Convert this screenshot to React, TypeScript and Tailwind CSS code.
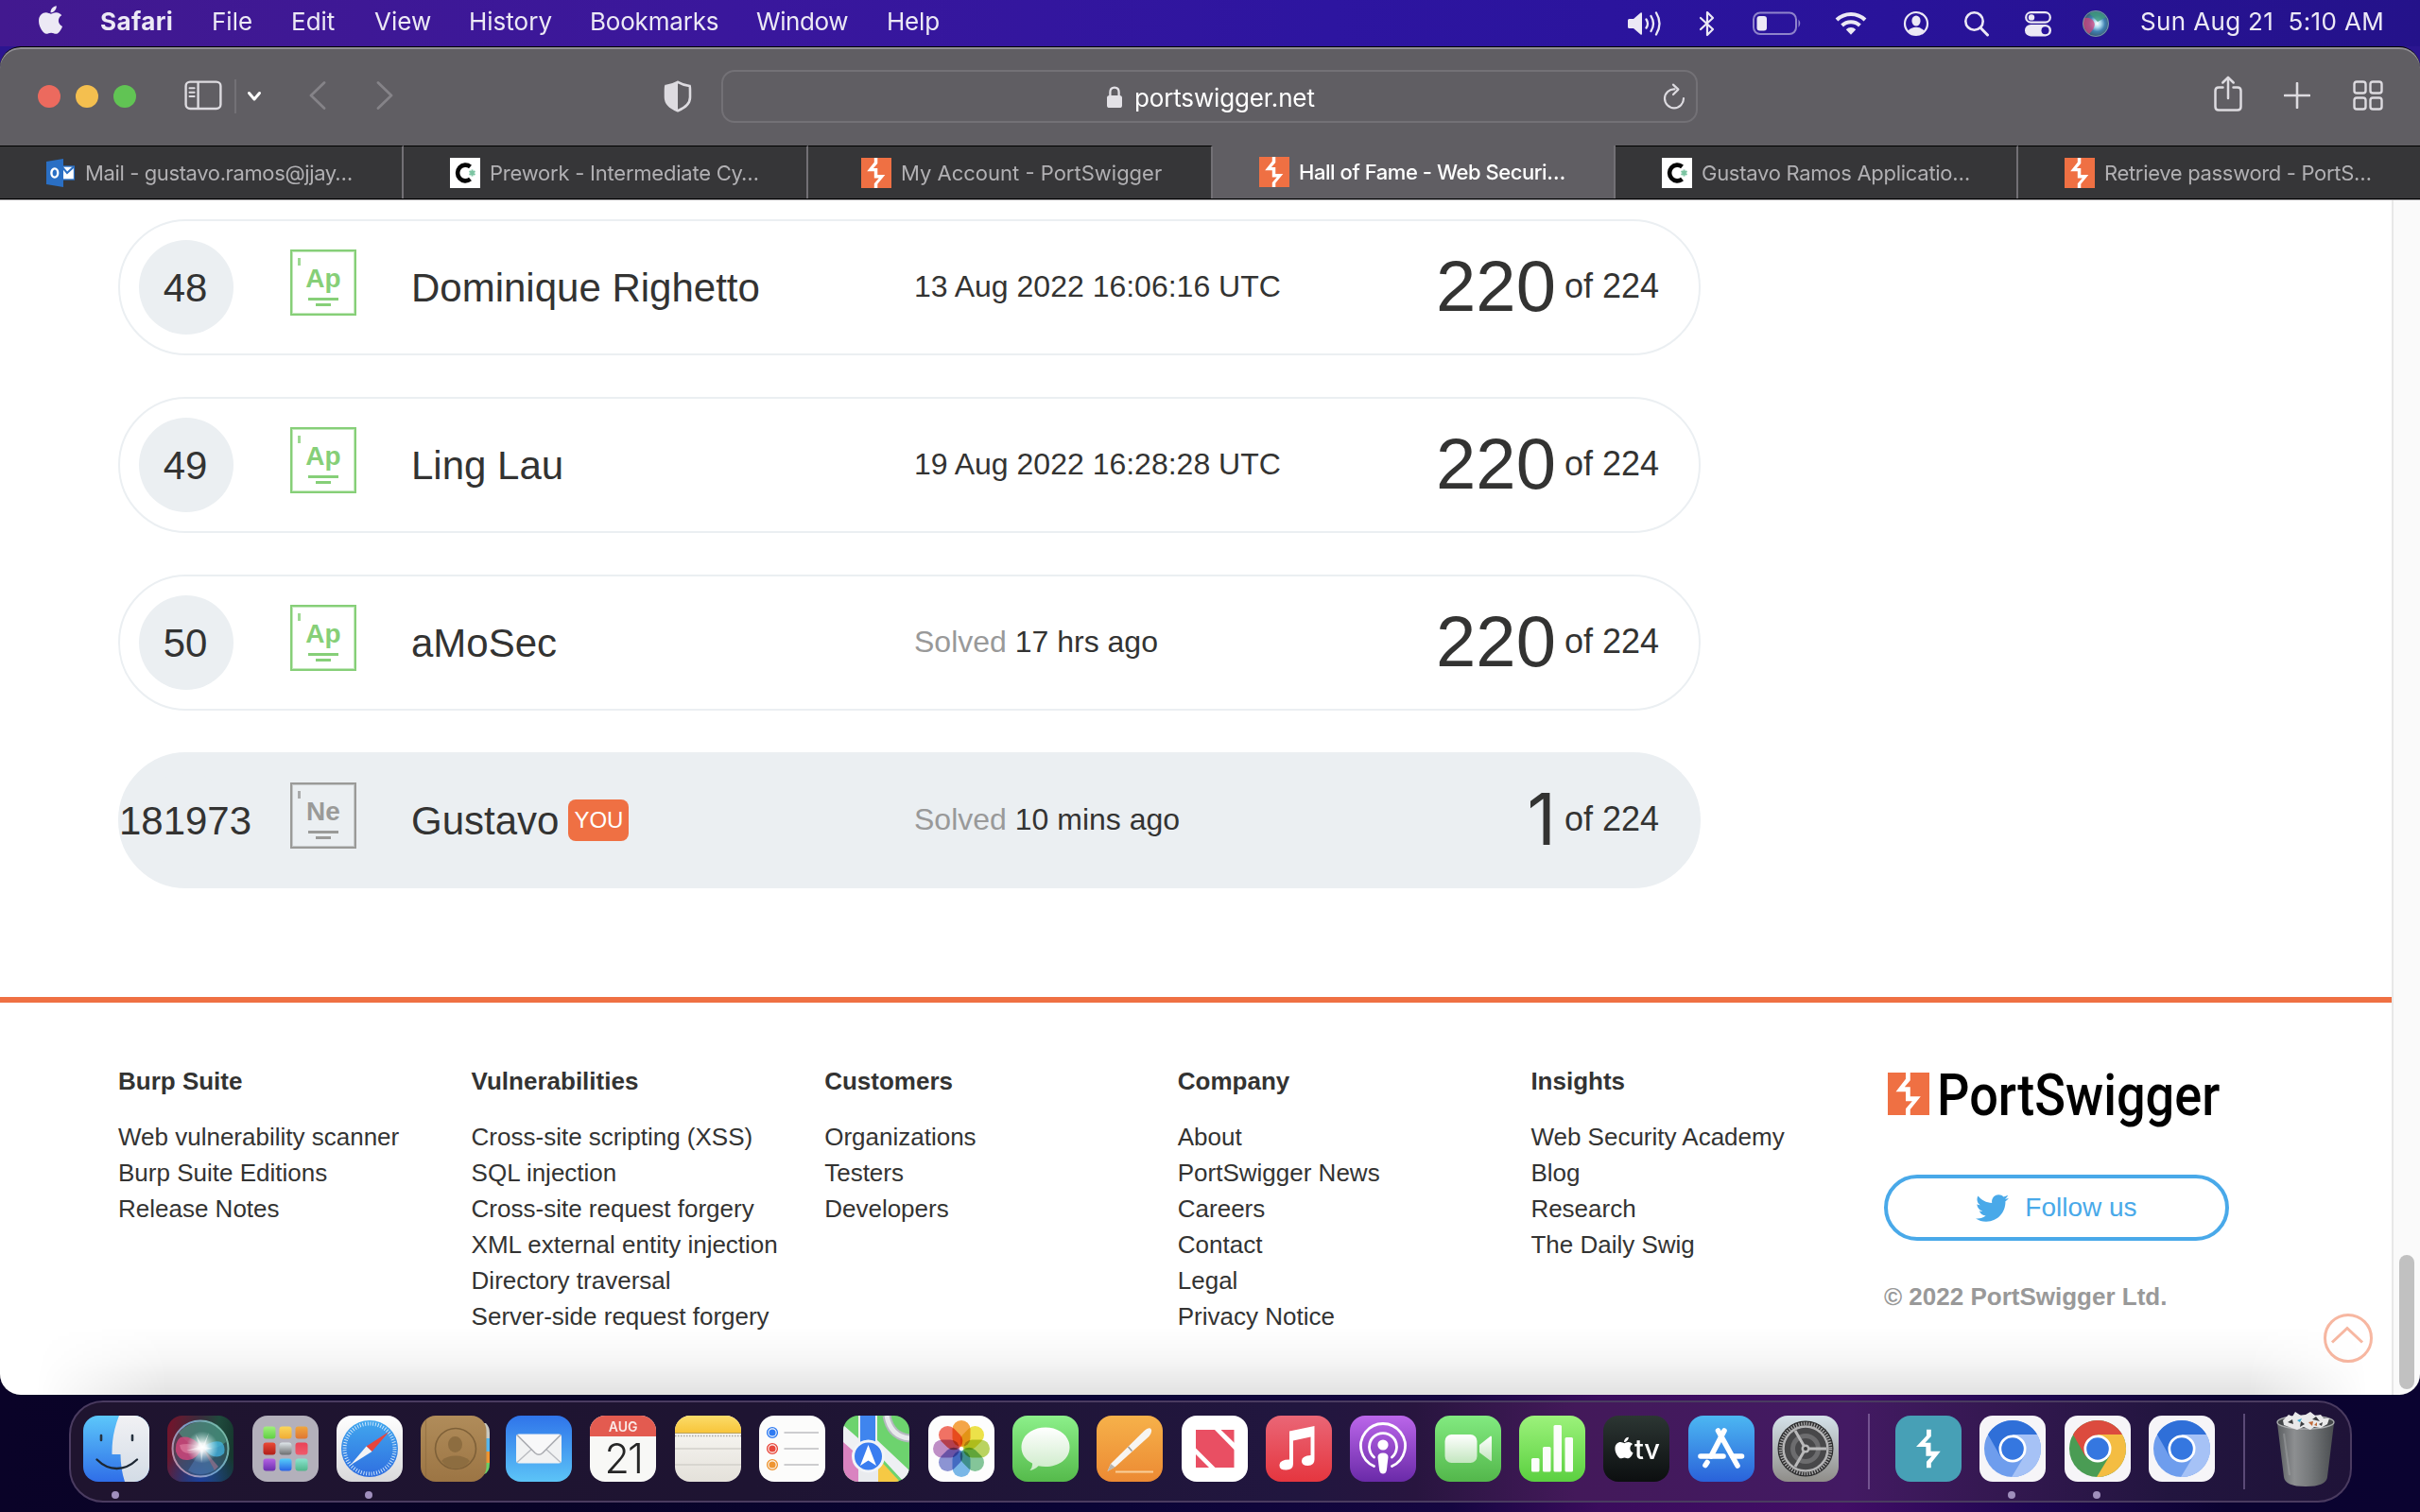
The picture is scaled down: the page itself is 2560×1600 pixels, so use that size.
import React from "react";
import { FaApple, FaTwitter } from "react-icons/fa";

/* ---------- shared marks ---------- */

function PortSwiggerMark({ className }: { className: string }) {
  return (
    <svg viewBox="0 0 45 45" preserveAspectRatio="none" className={`shrink-0 ${className}`}>
      <rect width="45" height="45" fill="#ef7043" />
      <path
        d="M19.4 0H24.3V8.3L18.2 15.3H24.3V25.2H35.6L24.3 39V45H19.4V38.3L26.4 30.2H19.4V20.2H8.7L19.4 6.7Z"
        fill="#fff"
      />
    </svg>
  );
}

function CodeIcon() {
  return (
    <svg viewBox="0 0 32 32" className="size-8 shrink-0">
      <rect width="32" height="32" fill="#fff" />
      <path d="M21.5 9.5A8.2 8.4 0 1 0 21.5 22.5" fill="none" stroke="#050505" strokeWidth="4.6" />
      <path d="M23.5 12.5V19.5M20.5 14.2L26.5 17.8M26.5 14.2L20.5 17.8" stroke="#7cc4a2" strokeWidth="2" />
    </svg>
  );
}

function OutlookIcon() {
  return (
    <svg viewBox="0 0 30 30" className="size-[30px] shrink-0">
      <rect x="14" y="8" width="15.5" height="14" fill="#fff" stroke="#2a6fc4" strokeWidth="1.4" />
      <path d="M17 9L22 15L29 8.5" fill="none" stroke="#2a6fc4" strokeWidth="2" />
      <path d="M0 3L18 0V30L0 27Z" fill="#2a6fc4" />
      <ellipse cx="8.8" cy="15" rx="3.4" ry="4.6" fill="none" stroke="#fff" strokeWidth="2.4" />
    </svg>
  );
}

/* ---------- menu bar ---------- */

const menus = [
  { label: "File", cls: "w-[84px]" },
  { label: "Edit", cls: "w-[88px]" },
  { label: "View", cls: "w-[100px]" },
  { label: "History", cls: "w-[128px]" },
  { label: "Bookmarks", cls: "w-[176px] tracking-[-0.2px]" },
  { label: "Window", cls: "w-[138px] tracking-[-0.4px]" },
  { label: "Help", cls: "w-[60px] tracking-[-0.2px]" },
];

function MenuBar() {
  return (
    <header className="flex h-[49px] shrink-0 items-start bg-[linear-gradient(90deg,#42198f_0%,#3a179c_30%,#2d15a0_55%,#29139a_78%,#24128a_100%)] pl-[39px] font-['Inter'] text-[26px] leading-[45px] text-[#ece9f5]">
      <FaApple className="mt-[4px] h-[34px] w-[29px]" />
      <div className="ml-[38px] flex whitespace-nowrap">
        <span className="w-[118px] font-bold tracking-[0.4px]">Safari</span>
        {menus.map((m) => (
          <span key={m.label} className={m.cls}>
            {m.label}
          </span>
        ))}
      </div>
      <div className="ml-auto flex h-[49px] items-center pr-[36px]">
        <svg width="38" height="26" viewBox="0 0 38 26" className="mr-[38px]">
          <path d="M1 9.5Q1 8 2.5 8H7L14.5 1.5Q16 .5 16 2.5V23.5Q16 25.5 14.5 24.5L7 18H2.5Q1 18 1 16.5Z" fill="#ece9f5" />
          <path d="M20.5 8.5Q23.5 13 20.5 17.5M25.5 5Q30.5 13 25.5 21M31 1.5Q38 13 31 24.5" fill="none" stroke="#ece9f5" strokeWidth="2.3" strokeLinecap="round" />
        </svg>
        <svg width="18" height="28" viewBox="0 0 18 28" className="mr-[39px]">
          <path d="M2 8L15 20L9 26V2L15 8L2 20" fill="none" stroke="#ece9f5" strokeWidth="2.2" strokeLinejoin="round" strokeLinecap="round" />
        </svg>
        <svg width="52" height="26" viewBox="0 0 52 26" className="mr-[35px]">
          <rect x="1" y="1.5" width="45" height="22.5" rx="7" fill="none" stroke="#8f84cb" strokeWidth="2" />
          <rect x="4.5" y="5" width="10.5" height="15.5" rx="3" fill="#ece9f5" />
          <path d="M48.5 8.5Q52 12.7 48.5 17Z" fill="#8f84cb" />
        </svg>
        <svg width="34" height="26" viewBox="0 0 34 26" className="mr-[38px]">
          <path d="M2 9A21.5 21.5 0 0 1 32 9" fill="none" stroke="#ece9f5" strokeWidth="4" />
          <path d="M7.6 15A13.5 13.5 0 0 1 26.4 15" fill="none" stroke="#ece9f5" strokeWidth="4" />
          <path d="M11.8 19.2A7.5 7.5 0 0 1 22.2 19.2L17 24.8Z" fill="#ece9f5" />
        </svg>
        <svg width="28" height="28" viewBox="0 0 28 28" className="mr-[36px]">
          <circle cx="14" cy="14" r="12" fill="none" stroke="#ece9f5" strokeWidth="2.2" />
          <ellipse cx="14" cy="11" rx="4.6" ry="5.6" fill="#ece9f5" />
          <path d="M5.5 21.5Q9 17.8 14 17.8T22.5 21.5Q19 26 14 26T5.5 21.5Z" fill="#ece9f5" />
        </svg>
        <svg width="28" height="28" viewBox="0 0 28 28" className="mr-[36px]">
          <circle cx="11.5" cy="11.5" r="9.2" fill="none" stroke="#ece9f5" strokeWidth="2.6" />
          <path d="M18.2 18.5L25.5 26" stroke="#ece9f5" strokeWidth="3" strokeLinecap="round" />
        </svg>
        <svg width="30" height="28" viewBox="0 0 30 28" className="mr-[31px]">
          <rect x="2.2" y="2.2" width="25.6" height="10.4" rx="5.2" fill="none" stroke="#ece9f5" strokeWidth="2.2" />
          <circle cx="8" cy="7.4" r="3.2" fill="#ece9f5" />
          <rect x="1" y="15" width="28" height="12.4" rx="6.2" fill="#ece9f5" />
          <circle cx="22.5" cy="21.2" r="4" fill="#29139a" />
        </svg>
        <svg width="30" height="30" viewBox="0 0 30 30" className="mr-[32px]">
          <defs>
            <radialGradient id="siriMini" cx="0.55" cy="0.5">
              <stop offset="0" stopColor="#fff" />
              <stop offset="0.3" stopColor="#a8d8ee" />
              <stop offset="0.6" stopColor="#3f7fb0" />
              <stop offset="1" stopColor="#3a5a72" />
            </radialGradient>
          </defs>
          <circle cx="15" cy="15" r="14" fill="url(#siriMini)" />
          <path d="M3 9A14 14 0 0 0 8 26Q16 18 13 13T3 9Z" fill="#d0427c" opacity=".75" />
          <path d="M8 4Q18 -1 26 8L17 13Z" fill="#3f9a7a" opacity=".8" />
          <circle cx="15" cy="15" r="13.5" fill="none" stroke="#9fb6c6" strokeWidth="1" opacity=".6" />
        </svg>
        <span className="-mt-[4px] w-[260px] whitespace-pre tracking-[0.35px]">Sun Aug 21  5:10 AM</span>
      </div>
    </header>
  );
}

/* ---------- browser chrome ---------- */

function Toolbar() {
  return (
    <div className="mb-[1px] flex h-[102px] items-center px-[40px]">
      <div className="flex gap-4">
        <span className="size-6 rounded-full bg-[#ec6a5e]" />
        <span className="size-6 rounded-full bg-[#f4bf4f]" />
        <span className="size-6 rounded-full bg-[#61c454]" />
      </div>
      <svg width="40" height="32" viewBox="0 0 40 32" className="-mt-[2px] ml-[51px]" fill="none" stroke="#dddbe0" strokeWidth="2.4">
        <rect x="1.6" y="1.6" width="36.8" height="28.4" rx="4.5" />
        <path d="M14.6 2V30" />
        <path d="M5.5 8.3H10.6M5.5 12.7H10.6M5.5 17.1H10.6" strokeWidth="2" strokeLinecap="round" />
      </svg>
      <span className="ml-[13px] h-9 w-[2px] bg-[#737176]" />
      <svg width="16" height="12" viewBox="0 0 16 12" className="-mt-[1px] ml-[11px]">
        <path d="M2.5 2.5L8 9L13.5 2.5" fill="none" stroke="#fff" strokeWidth="3" strokeLinecap="round" strokeLinejoin="round" />
      </svg>
      <svg width="18" height="30" viewBox="0 0 18 30" className="-mt-[2px] ml-[50px]">
        <path d="M16 1.5L2 15L16 28.5" fill="none" stroke="#858388" strokeWidth="2.8" strokeLinecap="round" strokeLinejoin="round" />
      </svg>
      <svg width="18" height="30" viewBox="0 0 18 30" className="-mt-[2px] ml-[53px]">
        <path d="M2 1.5L16 15L2 28.5" fill="none" stroke="#858388" strokeWidth="2.8" strokeLinecap="round" strokeLinejoin="round" />
      </svg>
      <svg width="30" height="34" viewBox="0 0 30 34" className="-mt-[1px] ml-[286px]">
        <path d="M15 1.8Q21 5.2 27.6 6Q28 7 28 12V18Q28 27 15 32.2Q2 27 2 18V12Q2 7 2.4 6Q9 5.2 15 1.8Z" fill="none" stroke="#dddbe0" strokeWidth="2.6" />
        <path d="M15 1.8V32.2Q2 27 2 18V6Q9 5.2 15 1.8Z" fill="#dddbe0" />
      </svg>
      <div className="ml-[31px] flex h-14 w-[1033px] items-center rounded-[14px] border-2 border-[#737176]">
        <svg width="18" height="24" viewBox="0 0 18 24" className="ml-[405px] mt-[2px]">
          <rect x="1" y="10" width="16" height="13" rx="2.6" fill="#e3e1e6" />
          <path d="M4.4 11V6.5Q4.4 1.6 9 1.6T13.6 6.5V11" fill="none" stroke="#e3e1e6" strokeWidth="2.3" />
        </svg>
        <span className="ml-[12px] mt-[3px] w-[200px] whitespace-nowrap font-['Inter'] text-[26px] leading-none tracking-[-0.15px] text-white">portswigger.net</span>
        <svg width="24" height="28" viewBox="0 0 24 28" className="ml-auto mr-[11px]" fill="none" stroke="#dddbe0" strokeWidth="2.2" strokeLinecap="round" strokeLinejoin="round">
          <path d="M12.5 6.3A10 10 0 1 0 22 16" />
          <path d="M11 1.6L16.4 6.6L11 12" />
        </svg>
      </div>
      <div className="-mt-[2px] ml-auto flex items-center">
        <svg width="30" height="38" viewBox="0 0 30 38" className="-mt-[4px]" fill="none" stroke="#dddbe0" strokeWidth="2.5" strokeLinecap="round" strokeLinejoin="round">
          <path d="M9.5 12.5H5Q1.5 12.5 1.5 16V33Q1.5 36.5 5 36.5H25Q28.5 36.5 28.5 33V16Q28.5 12.5 25 12.5H20.5" />
          <path d="M15 24V2M9.3 7.5L15 1.8L20.7 7.5" />
        </svg>
        <svg width="28" height="28" viewBox="0 0 28 28" className="ml-[44px]">
          <path d="M14 1V27M1 14H27" stroke="#dddbe0" strokeWidth="2.6" strokeLinecap="round" />
        </svg>
        <svg width="32" height="32" viewBox="0 0 32 32" className="ml-[45px] -mr-[1px]" fill="none" stroke="#dddbe0" strokeWidth="2.4">
          <rect x="1.5" y="1.5" width="12" height="12" rx="2.6" />
          <rect x="18.5" y="1.5" width="12" height="12" rx="2.6" />
          <rect x="1.5" y="18.5" width="12" height="12" rx="2.6" />
          <rect x="18.5" y="18.5" width="12" height="12" rx="2.6" />
        </svg>
      </div>
    </div>
  );
}

const tabs = [
  { icon: "outlook", text: "Mail - gustavo.ramos@jjay…", box: "w-[427px] pl-[49px] gap-[11px] tracking-[-0.38px]" },
  { icon: "code", text: "Prework - Intermediate Cy…", box: "w-[428px] pl-[49px] gap-[10px] tracking-[-0.23px]" },
  { icon: "ps", text: "My Account - PortSwigger", box: "w-[428px] pl-[56px] gap-[10px]" },
  { icon: "ps", text: "Hall of Fame - Web Securi…", box: "w-[426px] pl-[49px] gap-[10px] tracking-[-0.45px]", active: true },
  { icon: "code", text: "Gustavo Ramos Applicatio…", box: "w-[426px] pl-[49px] gap-[10px] tracking-[-0.28px]" },
  { icon: "ps", text: "Retrieve password - PortS…", box: "w-[425px] pl-[49px] gap-[10px] tracking-[-0.33px]" },
];

function TabIcon({ kind }: { kind: string }) {
  if (kind === "outlook") return <OutlookIcon />;
  if (kind === "code") return <CodeIcon />;
  return <PortSwiggerMark className="size-8" />;
}

function TabBar() {
  return (
    <nav className="flex h-[57px] border-b border-black font-['Inter'] text-[22px] leading-none">
      {tabs.map((t) => (
        <div
          key={t.text}
          className={
            t.active
              ? `flex items-center whitespace-nowrap border-r-2 border-[#727075] font-medium text-white ${t.box}`
              : `flex items-center whitespace-nowrap border-r-2 border-r-[#727075] border-t border-t-black bg-[#363638] text-[#b1b0b3] last:border-r-0 ${t.box}`
          }
        >
          <TabIcon kind={t.icon} />
          <span>{t.text}</span>
        </div>
      ))}
    </nav>
  );
}

/* ---------- page ---------- */

const rows = [
  { rank: "48", level: "Ap", name: "Dominique Righetto", date: "13 Aug 2022 16:06:16 UTC", score: "220" },
  { rank: "49", level: "Ap", name: "Ling Lau", date: "19 Aug 2022 16:28:28 UTC", score: "220" },
  { rank: "50", level: "Ap", name: "aMoSec", solved: "17 hrs ago", score: "220" },
  { rank: "181973", level: "Ne", name: "Gustavo", solved: "10 mins ago", score: "1", you: true },
];

function LevelBadge({ level, muted }: { level: string; muted?: boolean }) {
  return (
    <div
      className={`relative ml-[60px] flex size-[70px] shrink-0 -translate-y-[5px] flex-col items-center border-2 ${
        muted
          ? "border-[#9a9a98] text-[#9a9a98] shadow-[inset_0_0_0_1px_#c6c9ca]"
          : "border-[#86cf78] text-[#86cf78] shadow-[inset_0_0_0_1px_#c4e8bd]"
      }`}
    >
      <span className="absolute left-[6px] top-[7px] h-2 w-[3px] bg-current opacity-80" />
      <span className="mt-[14px] text-[28px] font-bold leading-[30px]">{level}</span>
      <span className="mt-[5px] h-[3px] w-8 bg-current" />
      <span className="mt-[3px] h-[3px] w-4 bg-current" />
    </div>
  );
}

function Row({ row }: { row: (typeof rows)[number] }) {
  return (
    <li
      className={`flex h-36 items-center whitespace-nowrap rounded-full border-2 border-[#ebeff2] pl-5 pr-[42px] ${
        row.you ? "bg-[#ebeff2]" : ""
      }`}
    >
      <div className="flex size-[100px] shrink-0 items-center justify-center rounded-full bg-[#ebeff2] pr-[2px] text-[42px]">
        {row.rank}
      </div>
      <LevelBadge level={row.level} muted={row.you} />
      <div className="ml-[58px] flex w-[532px] items-center text-[42px]">
        {row.name}
        {row.you && (
          <span className="ml-[10px] flex h-11 w-16 items-center justify-center rounded-lg bg-[#ef7043] text-2xl text-white">
            YOU
          </span>
        )}
      </div>
      <div className="-mt-[2px] text-[32px]">
        {row.solved ? (
          <>
            <span className="text-[#999]">Solved</span> {row.solved}
          </>
        ) : (
          row.date
        )}
      </div>
      <div className="-mt-[3px] ml-auto flex items-center gap-[9px]">
        <span className={row.you ? "font-['Inter'] text-[75px] leading-none" : "text-[76px] leading-none"}>{row.score}</span>
        <span className="text-[36px]">of 224</span>
      </div>
    </li>
  );
}

const columns = [
  { title: "Burp Suite", links: ["Web vulnerability scanner", "Burp Suite Editions", "Release Notes"] },
  {
    title: "Vulnerabilities",
    links: [
      "Cross-site scripting (XSS)",
      "SQL injection",
      "Cross-site request forgery",
      "XML external entity injection",
      "Directory traversal",
      "Server-side request forgery",
    ],
  },
  { title: "Customers", links: ["Organizations", "Testers", "Developers"] },
  { title: "Company", links: ["About", "PortSwigger News", "Careers", "Contact", "Legal", "Privacy Notice"] },
  { title: "Insights", links: ["Web Security Academy", "Blog", "Research", "The Daily Swig"] },
];

function Footer() {
  return (
    <footer className="mt-[115px] flex border-t-[6px] border-[#ef7043] pl-[125px] pt-16 text-[26px] leading-[38px]">
      {columns.map((c) => (
        <div key={c.title} className="w-[373.6px] whitespace-nowrap">
          <h3 className="mb-[21px] font-bold">{c.title}</h3>
          <ul>
            {c.links.map((l) => (
              <li key={l}>{l}</li>
            ))}
          </ul>
        </div>
      ))}
      <div className="flex w-[365px] flex-col whitespace-nowrap pt-[10px]">
        <div className="ml-1 flex h-[45px] items-center">
          <PortSwiggerMark className="h-[45px] w-[44px]" />
          <span className="ml-[8px] mt-[1px] origin-left scale-x-[0.872] font-['Roboto'] text-[62px] font-medium leading-[45px] text-black">
            PortSwigger
          </span>
        </div>
        <div className="mt-[63px] flex h-[70px] items-center justify-center rounded-full border-4 border-[#49a9e9] text-[28px] text-[#49a9e9]">
          <FaTwitter className="mr-[17px] size-[35px]" />
          Follow us
        </div>
        <p className="mt-[40px] font-bold text-[#999]">© 2022 PortSwigger Ltd.</p>
      </div>
    </footer>
  );
}

function Page() {
  return (
    <div className="relative flex h-[1265px] border-t border-[#a9a8ab] bg-white font-['Liberation_Sans'] text-[#333332]">
      <main className="w-[2530px]">
        <ol className="ml-[125px] mt-5 flex w-[1674px] flex-col gap-11">
          {rows.map((r) => (
            <Row key={r.rank} row={r} />
          ))}
        </ol>
        <Footer />
      </main>
      <div className="relative w-[30px] border-l-2 border-[#e8e8e8] bg-[#fafafa]">
        <div className="absolute left-[6px] top-[1116px] h-[142px] w-4 rounded-full bg-[#c1c1c1]" />
      </div>
      <svg viewBox="0 0 52 52" className="absolute left-[2458px] top-[1178px] size-[52px]" fill="none" stroke="#f7b7a1" strokeWidth="3">
        <circle cx="26" cy="26" r="24.5" />
        <path d="M9 30.5L25 15.5L41 30.5" />
      </svg>
      <div className="absolute bottom-0 left-0 h-[72px] w-[2530px] bg-[linear-gradient(180deg,transparent,rgba(0,0,0,0.03)_45%,rgba(0,0,0,0.115))] [mask-image:linear-gradient(90deg,transparent_1.5%,black_7%,black_94%,transparent_99%)]" />
    </div>
  );
}

/* ---------- dock ---------- */

function Tile({ children, className = "" }: { children: React.ReactNode; className?: string }) {
  return (
    <svg viewBox="0 0 70 70" className={`size-[70px] shrink-0 rounded-2xl ${className}`}>
      {children}
    </svg>
  );
}

function Grad({ id, from, to }: { id: string; from: string; to: string }) {
  return (
    <linearGradient id={id} x1="0" y1="0" x2="0" y2="1">
      <stop offset="0" stopColor={from} />
      <stop offset="1" stopColor={to} />
    </linearGradient>
  );
}

function Finder() {
  return (
    <Tile>
      <Grad id="fin1" from="#5cc7fa" to="#2f6ee8" />
      <Grad id="fin2" from="#f1f1f4" to="#d3dce6" />
      <rect width="70" height="70" fill="url(#fin1)" />
      <path d="M38 0Q30 20 30.5 41H39.5Q39.5 56 44 70H70V0Z" fill="url(#fin2)" />
      <path d="M19 21V26M52 21V26" stroke="#26323f" strokeWidth="2.6" strokeLinecap="round" />
      <path d="M14.5 46.5Q24 56 35.5 56T57 46.5" fill="none" stroke="#1c2733" strokeWidth="2.4" strokeLinecap="round" />
    </Tile>
  );
}

function Siri() {
  return (
    <Tile>
      <linearGradient id="si1" x1="0" y1="0.2" x2="1" y2="0.35">
        <stop offset="0" stopColor="#74142b" />
        <stop offset="0.45" stopColor="#3b2b3c" />
        <stop offset="0.75" stopColor="#1f4a3c" />
        <stop offset="1" stopColor="#17382f" />
      </linearGradient>
      <radialGradient id="si3" cx="0.5" cy="1" r="0.6">
        <stop offset="0" stopColor="#1c3f9c" />
        <stop offset="1" stopColor="#1c3f9c" stopOpacity="0" />
      </radialGradient>
      <radialGradient id="si2">
        <stop offset="0" stopColor="#fff" />
        <stop offset="0.25" stopColor="#fff" stopOpacity=".9" />
        <stop offset="1" stopColor="#c9f4f0" stopOpacity="0" />
      </radialGradient>
      <linearGradient id="si4" x1="0" x2="1" y1="0.8" y2="0.2">
        <stop offset="0" stopColor="#d7a0b6" />
        <stop offset="0.5" stopColor="#7fb2e0" />
        <stop offset="1" stopColor="#86cfb4" />
      </linearGradient>
      <rect width="70" height="70" fill="url(#si1)" />
      <rect width="70" height="70" fill="url(#si3)" />
      <circle cx="35" cy="35" r="29" fill="#4a6a7a" opacity=".45" />
      <path d="M12 18Q28 2 46 8Q60 14 62 28Q50 38 36 34Q22 32 12 18Z" fill="#4fa58a" opacity=".55" />
      <path d="M37 34Q26 20 14 23Q8 27 9 38Q12 48 22 47Q32 46 37 34Z" fill="#e0457f" opacity=".75" />
      <path d="M37 34Q24 28 13 31Q14 40 24 40Q32 39 37 34Z" fill="#f29cb8" opacity=".45" />
      <path d="M37 34Q48 25 57 28Q62 32 60 40Q54 46 46 42Z" fill="#42b4e6" opacity=".75" />
      <path d="M37 34L22 58Q34 66 50 58Z" fill="#5b92d8" opacity=".35" />
      <path d="M37 34L54 54L50 58Z" fill="#e88aa8" opacity=".4" />
      <circle cx="37" cy="33.5" r="17" fill="url(#si2)" />
      <path d="M30 20L37.5 32L44 18L39.500 33L48 35L38 36L36 50L35 36L20 37L34 33Z" fill="#fff" opacity=".5" />
      <circle cx="35" cy="35" r="29.5" fill="none" stroke="url(#si4)" strokeWidth="2" opacity=".85" />
    </Tile>
  );
}

const pads = [
  ["#a0f07c", "#5fd043"],
  ["#fbd65a", "#f0ac35"],
  ["#f0a63e", "#df7633"],
  ["#ea4a36", "#b01f1a"],
  ["#dfe6ea", "#6c6e70"],
  ["#ea4257", "#ef5b6c"],
  ["#b562e4", "#6a2fae"],
  ["#55cffa", "#2a62e4"],
  ["#8be4cf", "#4fb58a"],
];

function Launchpad() {
  return (
    <Tile>
      <rect width="70" height="70" fill="#b3b0bb" />
      {pads.map(([from, to], i) => (
        <g key={from}>
          <Grad id={`pad${i}`} from={from} to={to} />
          <rect x={11.5 + (i % 3) * 17} y={11.5 + Math.floor(i / 3) * 17} width="13" height="13" rx="3" fill={`url(#pad${i})`} />
        </g>
      ))}
    </Tile>
  );
}

function Safari() {
  return (
    <Tile>
      <Grad id="sf1" from="#ffffff" to="#d9d9db" />
      <Grad id="sf2" from="#41a7ee" to="#2f6ee0" />
      <rect width="70" height="70" fill="url(#sf1)" />
      <circle cx="35" cy="35" r="30" fill="url(#sf2)" />
      <circle cx="35" cy="35" r="26.5" fill="none" stroke="#d8ebfb" strokeWidth="4" strokeDasharray="0.9 1.87" />
      <path d="M55.500 17L37.500 38L31.500 32.500Z" fill="#e8453c" />
      <path d="M14.5 52.5L31.5 32.500L37.500 38Z" fill="#f3f3f5" />
    </Tile>
  );
}

function Contacts() {
  return (
    <svg viewBox="0 0 73 70" className="-mr-[3px] h-[70px] w-[73px] shrink-0">
      <Grad id="ct1" from="#b08c5a" to="#9c7544" />
      <path d="M60 8H69Q73 12 73 18V25H60Z" fill="#c9c9c0" />
      <path d="M60 24H73V38H60Z" fill="#55b6ec" />
      <path d="M60 38H73V50H60Z" fill="#ee9430" />
      <path d="M60 50H73Q73 60 67 62H60Z" fill="#6ad066" />
      <rect width="69.5" height="70" rx="16" fill="url(#ct1)" />
      <path d="M5.5 4V66" stroke="#8b6a3e" strokeWidth="1.2" opacity=".6" />
      <circle cx="37" cy="35" r="21.5" fill="none" stroke="#7e6038" strokeWidth="1.6" />
      <ellipse cx="36.5" cy="30.5" rx="7.5" ry="8.5" fill="#8d6d40" />
      <path d="M22 48Q27 42.5 37 42.5T52 48Q46 56 37 56T22 48Z" fill="#8d6d40" />
    </svg>
  );
}

function Mail() {
  return (
    <Tile>
      <Grad id="ml1" from="#2f74ea" to="#5cc4f7" />
      <rect width="70" height="70" fill="url(#ml1)" />
      <rect x="11" y="19.5" width="48" height="31" rx="3" fill="#f1f2f3" />
      <path d="M12 49.5L29 34M58 49.5L41 34" stroke="#b9bbc0" strokeWidth="1.4" />
      <path d="M12 20.5L31 39.5Q35 43 39 39.5L58 20.5" fill="#f8f8f9" stroke="#a9abb0" strokeWidth="1.6" />
    </Tile>
  );
}

function Calendar() {
  return (
    <div className="flex size-[70px] shrink-0 flex-col items-center overflow-hidden rounded-2xl bg-[#f8f8f6] font-['Inter']">
      <div className="flex h-[22px] w-full shrink-0 items-center justify-center bg-[#e35b50] pt-[2px] text-[14px] font-semibold leading-none text-[#fbe9e6]">
        AUG
      </div>
      <span className="mt-[1px] text-[43px] font-light leading-[44px] tracking-[-2px] text-[#262626]">21</span>
    </div>
  );
}

function Notes() {
  return (
    <Tile>
      <Grad id="nt1" from="#fbdc6a" to="#f8c53a" />
      <Grad id="nt2" from="#fbfaf7" to="#e4e1da" />
      <rect width="70" height="70" fill="url(#nt2)" />
      <rect width="70" height="18" fill="url(#nt1)" />
      <path d="M0 18.5H70" stroke="#b9a15c" strokeWidth="1" />
      <path d="M0 21.5H70" stroke="#a8a69f" strokeWidth="1.5" strokeDasharray="1.5 1.5" />
      <path d="M0 35H70M0 52H70" stroke="#d2d0ca" strokeWidth="1.4" />
    </Tile>
  );
}

const reminderDots = ["#2f7bf2", "#e8493d", "#ee9532"];

function Reminders() {
  return (
    <Tile>
      <rect width="70" height="70" fill="#fcfcfb" />
      {reminderDots.map((c, i) => (
        <g key={c} transform={`translate(14 ${18 + i * 17})`}>
          <circle r="5.4" fill="none" stroke={c} strokeWidth="1.4" />
          <circle r="3.6" fill={c} />
          <path d="M12.5 0H49" stroke="#bebec0" strokeWidth="1.6" />
        </g>
      ))}
    </Tile>
  );
}

function Maps() {
  return (
    <Tile>
      <rect width="70" height="70" fill="#6dd36e" />
      <path d="M0 24L0 70H16V40Z" fill="#d983c0" />
      <path d="M36 44L60 70H36Z" fill="#f6c944" />
      <path d="M0 10L0 28L18 44L40 44L64 70H70V58L36 26V0H16V24Z" fill="#eef0f3" />
      <path d="M16 46V70H37V46Z" fill="#e9ebee" />
      <path d="M18 0H34V44H18Z" fill="#3f85ee" />
      <path d="M46 0Q50 22 70 24" fill="none" stroke="#b5b8c0" strokeWidth="9" />
      <path d="M46 0Q50 22 70 24" fill="none" stroke="#e7e9ec" strokeWidth="5" />
      <circle cx="26.5" cy="43" r="16" fill="#3a7df0" stroke="#f2f4f7" strokeWidth="3" />
      <path d="M26.5 31L35 53L26.5 47.5L18 53Z" fill="#fff" />
    </Tile>
  );
}

const petals = ["#f59a2e", "#ecdf2f", "#b3d04b", "#74c08c", "#67b0e6", "#7d86cf", "#b87fc0", "#f1604f"];

function Photos() {
  return (
    <Tile>
      <rect width="70" height="70" fill="#fdfdfd" />
      {petals.map((c, i) => (
        <rect
          key={c}
          x="25.5"
          y="5"
          width="19"
          height="28"
          rx="9.5"
          fill={c}
          opacity=".88"
          transform={`rotate(${i * 45} 35 35)`}
          className="mix-blend-multiply"
        />
      ))}
    </Tile>
  );
}

function Messages() {
  return (
    <Tile>
      <Grad id="ms1" from="#8cf08a" to="#55ba4b" />
      <Grad id="ms2" from="#ffffff" to="#cdebc9" />
      <rect width="70" height="70" fill="url(#ms1)" />
      <path d="M35 12.5C49 12.5 60.5 21 60.5 33.5S49 54 35 54Q31 54 27.5 53.2Q23 57.5 18.5 58Q21.5 54.5 21 50.5C14 47 9.5 41 9.5 33.5C9.5 21 21 12.5 35 12.5Z" fill="url(#ms2)" />
    </Tile>
  );
}

function Pages() {
  return (
    <Tile>
      <Grad id="pg1" from="#f6b14a" to="#ec8a33" />
      <rect width="70" height="70" fill="url(#pg1)" />
      <path d="M57 13.5Q60 16 55.5 22L20 54L11.5 59L15 51L50 16.5Q54.5 12.5 57 13.5Z" fill="#f7f5f2" />
      <path d="M33.5 33L37.5 37.5" stroke="#9c9a97" strokeWidth="1.6" />
      <path d="M11.5 59L15 51L19.5 54.500Z" fill="#b8b4ae" />
      <path d="M20 59.5H60" stroke="#f9cf9a" strokeWidth="2.2" />
    </Tile>
  );
}

function News() {
  return (
    <Tile>
      <rect width="70" height="70" fill="#fff" />
      <rect x="15" y="15" width="40.5" height="40" fill="#e94f63" />
      <path d="M34 14H40.5L56 29V36.5Z" fill="#fff" />
      <path d="M14.5 34L36.5 56H30L14.5 40.5Z" fill="#fff" />
    </Tile>
  );
}

function Music() {
  return (
    <Tile>
      <Grad id="mu1" from="#ea6676" to="#e5363f" />
      <rect width="70" height="70" fill="url(#mu1)" />
      <path d="M25 16.5L51.5 11V46.5Q51.5 53 44.5 53T38 47.5Q38.5 42.5 47.5 42V22.5L29 26.5V51Q29 57.5 21.5 57.5T14.5 52Q15 46.5 25 46.5Z" fill="#fff" />
    </Tile>
  );
}

function Podcasts() {
  return (
    <Tile>
      <Grad id="pc1" from="#bb66ea" to="#6a2aa8" />
      <rect width="70" height="70" fill="url(#pc1)" />
      <path d="M25.500 53.5A23.500 23.500 0 1 1 44.500 53.5" fill="none" stroke="#fff" strokeWidth="2.8" strokeLinecap="round" />
      <path d="M25.5 44A14.5 14.5 0 1 1 44.5 44" fill="none" stroke="#fff" strokeWidth="2.8" strokeLinecap="round" />
      <circle cx="35" cy="31" r="5.6" fill="#fff" />
      <path d="M29.5 44Q29.5 39.5 35 39.5T40.5 44L38.8 58Q38 61.5 35 61.5T31.2 58Z" fill="#fff" />
    </Tile>
  );
}

function FaceTime() {
  return (
    <Tile>
      <Grad id="ft1" from="#82ea80" to="#53b74b" />
      <Grad id="ft2" from="#ffffff" to="#c3e6bf" />
      <rect width="70" height="70" fill="url(#ft1)" />
      <rect x="10.5" y="20" width="34" height="30" rx="7" fill="url(#ft2)" />
      <path d="M47 31L59 21.5Q60 21.5 60 23V47Q60 48.5 59 48L47 39Z" fill="url(#ft2)" />
    </Tile>
  );
}

function Numbers() {
  return (
    <Tile>
      <Grad id="nb1" from="#9cf27b" to="#5bd040" />
      <rect width="70" height="70" fill="url(#nb1)" />
      <g fill="#fbfdfa">
        <rect x="13" y="45" width="8.5" height="14.5" rx="1.5" />
        <rect x="25" y="33" width="8.5" height="26.5" rx="1.5" />
        <rect x="36.5" y="10" width="8.5" height="49.5" rx="1.5" />
        <rect x="48.5" y="23" width="8.5" height="36.5" rx="1.5" />
      </g>
    </Tile>
  );
}

function AppleTv() {
  return (
    <div className="flex size-[70px] shrink-0 items-center justify-center rounded-2xl bg-linear-to-b from-[#2c3633] to-[#0c0f10] font-['Inter'] text-[29px] font-medium leading-none text-white">
      <FaApple className="-mt-[3px] h-[26px] w-[22px]" />
      tv
    </div>
  );
}

function AppStore() {
  return (
    <Tile>
      <Grad id="as1" from="#4cb7f2" to="#2a62da" />
      <rect width="70" height="70" fill="url(#as1)" />
      <g stroke="#fff" strokeWidth="5.6" strokeLinecap="round" fill="none">
        <path d="M38 16L24 43M20 49.5L18 52.5" />
        <path d="M31.5 16L52 53" />
        <path d="M13 43H37M47 43H56.5" />
      </g>
    </Tile>
  );
}

function SystemPreferences() {
  return (
    <Tile>
      <Grad id="sp1" from="#d5e2ea" to="#8f8d89" />
      <rect width="70" height="70" fill="url(#sp1)" />
      <circle cx="35" cy="35" r="29.5" fill="#2b2b2c" />
      <circle cx="35" cy="35" r="26.5" fill="none" stroke="#a6a6a7" strokeWidth="3.5" strokeDasharray="1.4 1.37" />
      <circle cx="35" cy="35" r="23.5" fill="#48484a" stroke="#b5b5b6" strokeWidth="2.5" />
      <circle cx="35" cy="35" r="13.5" fill="none" stroke="#6c6c6e" strokeWidth="5" />
      <path d="M35 35H57M35 35L24 16M35 35L24 54" stroke="#b9b9ba" strokeWidth="3" />
      <circle cx="35" cy="35" r="4.5" fill="#b9b9ba" />
      <circle cx="35" cy="35" r="2" fill="#3b3b3c" />
    </Tile>
  );
}

function Burp() {
  return (
    <Tile>
      <rect width="70" height="70" fill="#47a0b6" />
      <path d="M33 14.7H37.8V22L31.5 28.7H37.5V37.7H47.7L37.8 50.3V55.3H33V48.7L38.5 42.7H32.4V33H22L33 21.3Z" fill="#fff" />
    </Tile>
  );
}

function Chrome({ top, left, right }: { top: string; left: string; right: string }) {
  return (
    <Tile className="rounded-[14px]">
      <rect width="70" height="70" fill="#f6f5f8" />
      <circle cx="35" cy="35" r="30" fill={left} />
      <path d="M35 20H61A30 30 0 0 1 34 65L48 42Z" fill={right} />
      <path d="M9 20A30 30 0 0 1 61 20H35L22 43Z" fill={top} />
      <circle cx="35" cy="35" r="14.5" fill="#fff" />
      <circle cx="35" cy="35" r="11.8" fill="#3577e0" />
    </Tile>
  );
}

function Trash() {
  return (
    <svg viewBox="0 0 62 82" className="-mt-[5px] h-[82px] w-[62px] shrink-0">
      <linearGradient id="tr1" x1="0" x2="1" y1="0" y2="0">
        <stop offset="0" stopColor="#5b5e61" />
        <stop offset="0.3" stopColor="#8d8f91" />
        <stop offset="0.6" stopColor="#747779" />
        <stop offset="1" stopColor="#4a4d50" />
      </linearGradient>
      <path d="M1 13L8 70Q9 80 31 80T54 70L61 13Q50 19 31 19T1 13Z" fill="url(#tr1)" />
      <ellipse cx="31" cy="12" rx="30" ry="7" fill="#44474a" stroke="#a9abad" strokeWidth="1.4" />
      <path d="M7 10L13 4L17 6L20 1L26 5L31 4L36 1L41 5L47 4L50 8L56 8L54 14L47 18L40 17L36 20L29 17L22 20L16 18L8 15Z" fill="#e9e9ea" />
      <path d="M12 12L17 9L18 14ZM42 6L46 11L38 9ZM26 11L30 14L25 17ZM45 14L49 12L48 16Z" fill="#3b3d40" />
      <path d="M22 10L27 8L25 12Z" fill="#3aa7d0" />
      <path d="M34 12L39 11L38 16ZM40 15L43 12L43 16Z" fill="#c06a3a" />
      <path d="M8 24L14 68" stroke="#b5b7b8" strokeWidth="2" opacity=".35" />
    </svg>
  );
}

function Running({ children }: { children: React.ReactNode }) {
  return (
    <div className="relative">
      {children}
      <span className="absolute left-[30px] top-[80px] size-2 rounded-full bg-[#a08fbd]" />
    </div>
  );
}

function Dock() {
  return (
    <div className="ml-[73px] mt-[6px] flex h-[108px] w-[2415px] items-start gap-[19.36px] rounded-[36px] border-2 border-[#4a3b60] bg-[linear-gradient(90deg,#1f142f_0%,#1e1432_30%,#21163f_54%,#28153f_59%,#43195a_66%,#431a63_78%,#351852_84%,#22153f_92%,#1f1338_100%)] pl-[13px] pt-[14px]">
      <Running>
        <Finder />
      </Running>
      <Siri />
      <Launchpad />
      <Running>
        <Safari />
      </Running>
      <Contacts />
      <Mail />
      <Calendar />
      <Notes />
      <Reminders />
      <Maps />
      <Photos />
      <Messages />
      <Pages />
      <News />
      <Music />
      <Podcasts />
      <FaceTime />
      <Numbers />
      <AppleTv />
      <AppStore />
      <SystemPreferences />
      <span className="ml-[11px] mr-[8px] mt-[-2px] h-20 w-[2px] bg-[#735390]" />
      <Burp />
      <Running>
        <Chrome top="#2f6fd8" left="#6e9ded" right="#a6c2f6" />
      </Running>
      <Running>
        <Chrome top="#dc4b3e" left="#4a9c54" right="#f4bd42" />
      </Running>
      <Chrome top="#2f6fd8" left="#6e9ded" right="#a6c2f6" />
      <span className="ml-[11px] mr-[13px] mt-[-2px] h-20 w-[2px] bg-[#5b4a77]" />
      <Trash />
    </div>
  );
}

export default function App() {
  return (
    <div className="flex h-[1600px] w-[2560px] flex-col overflow-hidden bg-[linear-gradient(90deg,#0a0328_0%,#080325_20%,#0a0435_45%,#150640_60%,#3a0c5c_66%,#420e66_76%,#1e0650_84%,#0b0330_92%,#0a0330_100%)]">
      <MenuBar />
      <div className="bg-[linear-gradient(180deg,#2b1590_0%,#2b1590_50%,transparent_50%)]">
        <div className="h-[1427px] overflow-hidden rounded-[22px] border-t border-black bg-[#605e63] shadow-[inset_0_2px_0_#918f95]">
          <div className="h-[161px] pt-[1px]">
            <Toolbar />
            <TabBar />
          </div>
          <Page />
        </div>
      </div>
      <Dock />
    </div>
  );
}
